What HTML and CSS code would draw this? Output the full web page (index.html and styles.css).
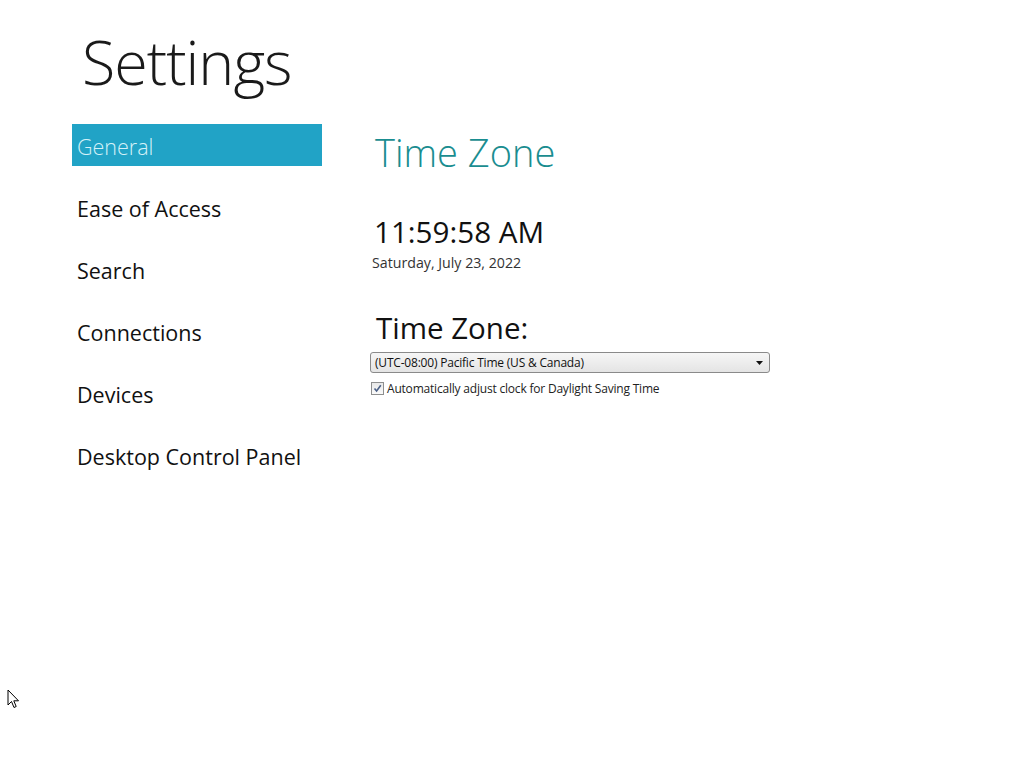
FILE: index.html
```html
<!DOCTYPE html>
<html>
<head>
<meta charset="utf-8">
<link rel="stylesheet" href="styles.css">
</head>
<body>
<div class="page">
  <h1 class="title">Settings</h1>
  <div class="main">
    <nav class="nav">
      <div class="nav-item active">General</div>
      <div class="nav-item">Ease of Access</div>
      <div class="nav-item">Search</div>
      <div class="nav-item">Connections</div>
      <div class="nav-item">Devices</div>
      <div class="nav-item">Desktop Control Panel</div>
    </nav>
    <section class="content">
      <h2 class="section-title">Time Zone</h2>
      <div class="clock">11:59:58 AM</div>
      <div class="date">Saturday, July 23, 2022</div>
      <div class="tz-label">Time Zone:</div>
      <div class="select">
        <span class="select-text">(UTC-08:00) Pacific Time (US &amp; Canada)</span>
        <svg class="select-arrow" width="8" height="4" viewBox="0 0 8 4"><path d="M0 0H7L3.5 4Z" fill="#111"/></svg>
      </div>
      <label class="check">
        <span class="box">
          <svg width="9" height="9" viewBox="0 0 9 9"><path d="M1.5 4.5L3.6 7L7.8 1.2" fill="none" stroke="#4a5f86" stroke-width="1.6"/></svg>
        </span>
        <span class="check-text">Automatically adjust clock for Daylight Saving Time</span>
      </label>
    </section>
  </div>
</div>
<svg class="cursor" width="14" height="20" viewBox="0 0 14 20"><path d="M1 1V16L4.5 12.5L7 18.5L9.2 17.5L6.8 11.8H11.5Z" fill="#fff" stroke="#000" stroke-width="1"/></svg>
</body>
</html>
```
FILE: styles.css
```css
html, body {
  margin: 0;
  padding: 0;
  background: #fff;
}
body {
  font-family: "Open Sans", "Noto Sans", sans-serif;
  color: #111;
  width: 1024px;
  height: 768px;
  overflow: hidden;
  position: relative;
}
.page {
  padding: 22px 0 0 72px;
}
.title {
  margin: 0 0 0 10px;
  font-weight: 300;
  font-size: 61px;
  line-height: 80px;
  letter-spacing: -1px;
  color: #1a1a1a;
  height: 102px;
}
.main {
  display: flex;
  gap: 48px;
}
.nav {
  width: 250px;
  display: flex;
  flex-direction: column;
  gap: 20px;
}
.nav-item {
  height: 42px;
  line-height: 46px;
  padding-left: 5px;
  font-size: 21.5px;
  font-weight: 400;
  letter-spacing: 0;
  color: #111;
}
.nav-item.active {
  background: #21a3c6;
  color: #d4f1f8;
  font-weight: 300;
}
.content {
  display: flex;
  flex-direction: column;
  align-items: flex-start;
}
.section-title {
  margin: 6px 0 0 5px;
  font-weight: 300;
  font-size: 38px;
  line-height: 44px;
  letter-spacing: 0;
  color: #1a8d90;
}
.clock {
  margin: 40px 0 0 4px;
  font-size: 29.6px;
  line-height: 36px;
  letter-spacing: 0;
  color: #111;
}
.date {
  margin: 4px 0 0 2px;
  font-size: 14.2px;
  line-height: 18px;
  color: #333;
  letter-spacing: 0;
}
.tz-label {
  margin: 38px 0 0 6px;
  font-size: 29.5px;
  line-height: 36px;
  letter-spacing: 0;
  color: #111;
}
.select {
  margin-top: 6px;
  box-sizing: border-box;
  width: 400px;
  height: 21px;
  border: 1px solid #8a8a8a;
  border-radius: 3px;
  background: linear-gradient(#f6f6f6, #e4e4e4);
  display: flex;
  align-items: center;
  justify-content: space-between;
  padding: 0 5px 0 4px;
}
.select-text {
  font-size: 12px;
  letter-spacing: -0.2px;
  color: #111;
}
.check {
  margin-top: 7px;
  height: 17px;
  display: flex;
  align-items: center;
  gap: 3px;
  padding-left: 1px;
}
.box {
  box-sizing: border-box;
  width: 13px;
  height: 13px;
  border: 1px solid #8e8f8f;
  background: linear-gradient(#e8e8e8, #fafafa);
  display: flex;
  align-items: center;
  justify-content: center;
}
.check-text {
  font-size: 12px;
  letter-spacing: -0.2px;
  color: #222;
}
.cursor {
  position: absolute;
  left: 7px;
  top: 689px;
}
```
